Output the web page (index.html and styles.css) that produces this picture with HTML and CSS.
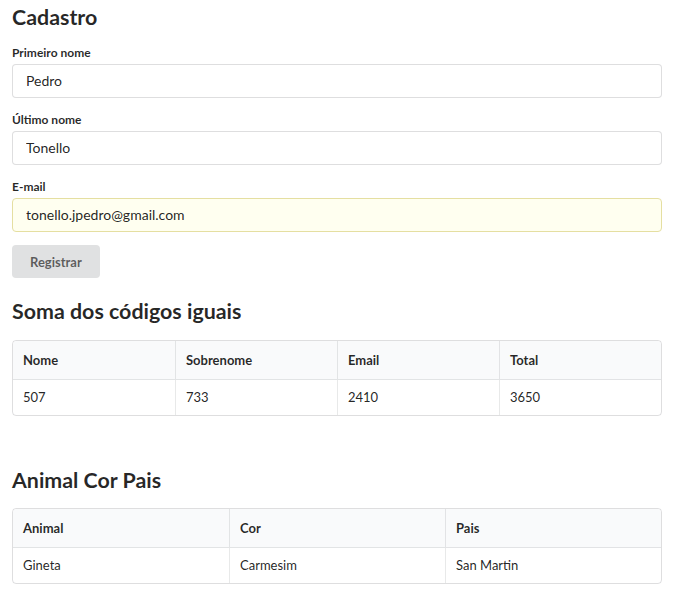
FILE: index.html
```html
<!DOCTYPE html>
<html lang="pt">
<head>
<meta charset="utf-8">
<title>Cadastro</title>
<link rel="stylesheet" href="styles.css">
</head>
<body>
<main class="page">
  <h2 class="header first">Cadastro</h2>
  <form class="form">
    <div class="field">
      <label>Primeiro nome</label>
      <input type="text" value="Pedro">
    </div>
    <div class="field">
      <label>Último nome</label>
      <input type="text" value="Tonello">
    </div>
    <div class="field">
      <label>E-mail</label>
      <input type="text" class="autofill" value="tonello.jpedro@gmail.com">
    </div>
    <button type="button" class="button">Registrar</button>
  </form>

  <h2 class="header sum">Soma dos códigos iguais</h2>
  <table class="celled">
    <thead>
      <tr><th>Nome</th><th>Sobrenome</th><th>Email</th><th>Total</th></tr>
    </thead>
    <tbody>
      <tr><td>507</td><td>733</td><td>2410</td><td>3650</td></tr>
    </tbody>
  </table>

  <h2 class="header spaced">Animal Cor Pais</h2>
  <table class="celled">
    <thead>
      <tr><th>Animal</th><th>Cor</th><th>Pais</th></tr>
    </thead>
    <tbody>
      <tr><td>Gineta</td><td>Carmesim</td><td>San Martin</td></tr>
    </tbody>
  </table>
</main>
</body>
</html>
```

FILE: styles.css
```css
html, body {
  margin: 0;
  padding: 0;
  background: #ffffff;
}
body {
  font-family: Lato, "Open Sans", sans-serif;
  font-size: 14px;
  line-height: 1.4285em;
  color: rgba(0, 0, 0, 0.87);
}
.page {
  padding: 0 13px 0 12px;
}
.header {
  font-family: Lato, sans-serif;
  font-weight: 700;
  font-size: 21.4px;
  line-height: 27px;
  margin: 19px 0 14px;
  color: rgba(0, 0, 0, 0.85);
}
.header.first {
  margin-top: 4px;
  margin-bottom: 14px;
}
.header.sum {
  margin-top: 20px;
  margin-bottom: 15px;
}
.header.spaced {
  margin-top: 51px;
  margin-bottom: 14px;
}
.form {
  display: flex;
  flex-direction: column;
  align-items: flex-start;
}
.field {
  display: flex;
  flex-direction: column;
  width: 100%;
  margin-bottom: 14px;
}
.field label {
  font-size: 12px;
  font-weight: 700;
  line-height: 16px;
  margin-bottom: 3px;
  color: rgba(0, 0, 0, 0.85);
}
.field input {
  font-family: Lato, sans-serif;
  font-size: 14px;
  line-height: 17px;
  padding: 7px 13px 9px;
  border: 1px solid rgba(34, 36, 38, 0.15);
  border-radius: 4px;
  color: rgba(0, 0, 0, 0.87);
  background: #fff;
  outline: none;
  box-sizing: border-box;
  width: 100%;
  height: 34px;
}
.field input.autofill {
  background: #fffff0;
  border-color: #e5dfa1;
}
.button {
  font-family: Lato, sans-serif;
  font-size: 13px;
  font-weight: 700;
  line-height: 14px;
  padding: 0 18px;
  height: 33px;
  margin-top: -1px;
  border: none;
  border-radius: 4px;
  background: #e0e1e2;
  color: rgba(0, 0, 0, 0.6);
  cursor: pointer;
}
.celled {
  width: 100%;
  border-collapse: separate;
  border-spacing: 0;
  border: 1px solid rgba(34, 36, 38, 0.15);
  border-radius: 4px;
  table-layout: fixed;
  font-size: 13px;
}
.celled th {
  background: #f9fafb;
  text-align: left;
  font-weight: 700;
  padding: 11px 10px;
  line-height: 16px;
  border-bottom: 1px solid rgba(34, 36, 38, 0.1);
  border-left: 1px solid rgba(34, 36, 38, 0.1);
  color: rgba(0, 0, 0, 0.85);
}
.celled thead tr th:first-child {
  border-radius: 4px 0 0 0;
}
.celled thead tr th:last-child {
  border-radius: 0 4px 0 0;
}
.celled td {
  padding: 10px 10px;
  line-height: 15px;
  border-left: 1px solid rgba(34, 36, 38, 0.1);
}
.celled th:first-child,
.celled td:first-child {
  border-left: none;
}
```
